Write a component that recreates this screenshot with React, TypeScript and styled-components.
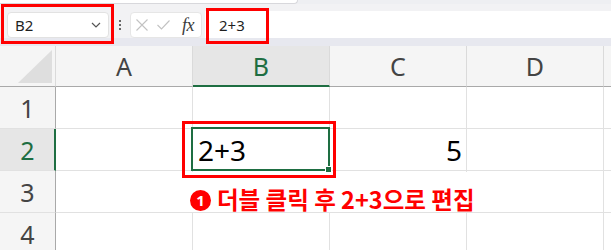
import React from 'react';
import styled, { createGlobalStyle } from 'styled-components';

const GlobalStyle = createGlobalStyle`
  html, body { margin: 0; padding: 0; background: #ffffff; }
  body { font-family: "Noto Sans", "Open Sans", sans-serif; }
`;

const Page = styled.div`
  width: 611px;
  height: 250px;
  overflow: hidden;
  display: flex;
  flex-direction: column;
  background: #ffffff;
`;

const Chrome = styled.div`
  background: #eeeff2;
  display: flex;
  flex-direction: column;
`;

const RibbonEdge = styled.div`
  height: 4px;
  display: flex;
`;

const RibbonPanel = styled.div`
  width: 297px;
  height: 3px;
  background: #ffffff;
  border-bottom: 1px solid #d8d8dc;
  border-right: 1px solid #d8d8dc;
  border-bottom-right-radius: 6px;
`;

const FormulaBar = styled.div`
  display: flex;
  align-items: stretch;
  height: 27px;
  padding: 7px 0 0 7px;
  background: #f2f2f4;
`;

const TintStrip = styled.div`
  height: 8px;
  background: #e7e8ef;
`;

const NameBox = styled.div`
  position: relative;
  width: 102px;
  margin-top: 1px;
  box-sizing: border-box;
  background: #ffffff;
  border: 1px solid #e2e2e2;
  border-radius: 4px;
  display: flex;
  align-items: center;
  justify-content: space-between;
  padding: 0 7px 0 7px;
  font-size: 15px;
  color: #1f1f1f;
`;

const RedFrame = styled.div<{ $l: number; $t: number; $r: number; $b: number }>`
  position: absolute;
  left: ${p => p.$l}px;
  top: ${p => p.$t}px;
  right: ${p => p.$r}px;
  bottom: ${p => p.$b}px;
  border: 3px solid #ff0000;
  pointer-events: none;
`;

const Dots = styled.div`
  width: 21px;
  display: flex;
  flex-direction: column;
  align-items: center;
  justify-content: center;
  gap: 2px;
  & > span {
    width: 2px;
    height: 2px;
    border-radius: 1px;
    background: #3a3a3a;
  }
`;

const FxGroup = styled.div`
  width: 72px;
  margin-top: 1px;
  box-sizing: border-box;
  background: #ffffff;
  border: 1px solid #e6e6e6;
  border-radius: 4px;
  display: flex;
  align-items: center;
  padding-left: 5px;
  gap: 9px;
`;

const FxLabel = styled.span`
  font-family: "Liberation Serif", "DejaVu Serif", serif;
  font-style: italic;
  font-size: 18px;
  color: #3c3c3c;
  margin-left: 3px;
  letter-spacing: -0.5px;
`;

const FormulaInput = styled.div`
  position: relative;
  flex: 1;
  margin-left: 3px;
  background: #ffffff;
  display: flex;
  align-items: center;
  padding-left: 14px;
  font-size: 15px;
  color: #1f1f1f;
`;

const Sheet = styled.div`
  position: relative;
  flex: 1;
  display: grid;
  grid-template-columns: 56px repeat(4, 137px) 1fr;
  grid-template-rows: 41px repeat(4, 42px);
  background: #ffffff;
`;

const Corner = styled.div`
  background: #f5f5f5;
  border-right: 1px solid #dadada;
  border-bottom: 1px solid #a9a9a9;
  display: flex;
  align-items: flex-end;
  justify-content: flex-end;
  padding: 0 3px 3px 0;
`;

const CornerTriangle = styled.div`
  width: 34px;
  height: 33px;
  background: #dedede;
  clip-path: polygon(100% 0, 100% 100%, 0 100%);
`;

const ColHeader = styled.div<{ $selected?: boolean }>`
  background: ${p => (p.$selected ? '#e6e6e6' : '#f5f5f5')};
  border-right: 1px solid #dadada;
  border-bottom: ${p => (p.$selected ? '2px solid #1e6e42' : '1px solid #a9a9a9')};
  display: flex;
  align-items: center;
  justify-content: center;
  font-size: 25px;
  line-height: 34px;
  padding-top: ${p => (p.$selected ? '1px' : '0')};
  color: ${p => (p.$selected ? '#1e6e42' : '#444444')};
`;

const RowHeader = styled.div<{ $selected?: boolean }>`
  background: ${p => (p.$selected ? '#e6e6e6' : '#f5f5f5')};
  border-right: ${p => (p.$selected ? '2px solid #1e6e42' : '1px solid #a9a9a9')};
  border-bottom: 1px solid #e1e1e1;
  display: flex;
  align-items: center;
  justify-content: center;
  font-size: 25px;
  line-height: 34px;
  padding-left: ${p => (p.$selected ? '1px' : '0')};
  color: ${p => (p.$selected ? '#1e6e42' : '#444444')};
`;

const Cell = styled.div<{ $align?: 'left' | 'right'; $active?: boolean }>`
  position: relative;
  z-index: ${p => (p.$active ? 2 : 'auto')};
  border-right: 1px solid #e1e1e1;
  border-bottom: 1px solid #e1e1e1;
  display: flex;
  align-items: center;
  justify-content: ${p => (p.$align === 'right' ? 'flex-end' : 'flex-start')};
  padding: 0 4px 0 5px;
  font-size: 28px;
  line-height: 38px;
  color: #000000;
`;

const ActiveBorder = styled.div`
  position: absolute;
  left: -2px;
  top: -2px;
  right: -1px;
  bottom: -1px;
  border: 2px solid #1e6e42;
  pointer-events: none;
`;

const FillHandle = styled.div`
  position: absolute;
  right: -3px;
  bottom: -3px;
  width: 5px;
  height: 5px;
  background: #1e6e42;
  border: 1px solid #ffffff;
`;

const Callout = styled.div`
  position: absolute;
  left: 187px;
  top: 126px;
  height: 40px;
  display: flex;
  align-items: flex-end;
  gap: 6px;
  padding: 0 8px 0 3px;
  background: #ffffff;
  z-index: 1;
`;

const Badge = styled.span`
  width: 21px;
  height: 21px;
  margin-bottom: 1px;
  border-radius: 50%;
  background: #ff0000;
  color: #ffffff;
  font-family: "Noto Sans", sans-serif;
  font-weight: 700;
  font-size: 15px;
  line-height: 21px;
  display: flex;
  align-items: center;
  justify-content: center;
`;

const CalloutText = styled.span`
  font-family: "Noto Sans CJK KR", "Noto Sans", sans-serif;
  font-weight: 700;
  font-size: 23.5px;
  line-height: 26px;
  color: #ff0000;
`;

const Chevron = () => (
  <svg width="10" height="6" viewBox="0 0 10 6" fill="none">
    <path d="M1 1 L5 5 L9 1" stroke="#555" strokeWidth="1.2" />
  </svg>
);

const XIcon = () => (
  <svg width="12" height="12" viewBox="0 0 12 12" fill="none">
    <path d="M0.5 0.5 L11.5 11.5 M11.5 0.5 L0.5 11.5" stroke="#c2c2c2" strokeWidth="1.1" />
  </svg>
);

const CheckIcon = () => (
  <svg width="13" height="10" viewBox="0 0 13 10" fill="none">
    <path d="M0.5 5 L4.5 9 L12.5 0.5" stroke="#c2c2c2" strokeWidth="1.1" />
  </svg>
);

const cols = ['A', 'B', 'C', 'D', ''];

export default function App() {
  return (
    <Page>
      <GlobalStyle />
      <Chrome>
        <RibbonEdge>
          <RibbonPanel />
        </RibbonEdge>
        <FormulaBar>
          <NameBox>
            <span>B2</span>
            <Chevron />
            <RedFrame $l={-7} $t={-9} $r={-6} $b={-7} />
          </NameBox>
          <Dots>
            <span />
            <span />
            <span />
          </Dots>
          <FxGroup>
            <XIcon />
            <CheckIcon />
            <FxLabel>fx</FxLabel>
          </FxGroup>
          <FormulaInput>
            2+3
            <RedFrame $l={1} $t={-3} $r={342} $b={-6} />
          </FormulaInput>
        </FormulaBar>
        <TintStrip />
      </Chrome>
      <Sheet>
        <Corner>
          <CornerTriangle />
        </Corner>
        {cols.map((c, i) => (
          <ColHeader key={i} $selected={c === 'B'}>
            {c}
          </ColHeader>
        ))}
        {[1, 2, 3, 4].map(r => (
          <React.Fragment key={r}>
            <RowHeader $selected={r === 2}>{r}</RowHeader>
            <Cell />
            {r === 2 ? (
              <Cell $active>
                2+3
                <ActiveBorder />
                <FillHandle />
                <RedFrame $l={-11} $t={-8} $r={-7} $b={-8} />
              </Cell>
            ) : (
              <Cell />
            )}
            <Cell $align="right">{r === 2 ? '5' : ''}</Cell>
            <Cell />
            <Cell />
          </React.Fragment>
        ))}
        <Callout>
          <Badge>1</Badge>
          <CalloutText>더블 클릭 후 2+3으로 편집</CalloutText>
        </Callout>
      </Sheet>
    </Page>
  );
}
